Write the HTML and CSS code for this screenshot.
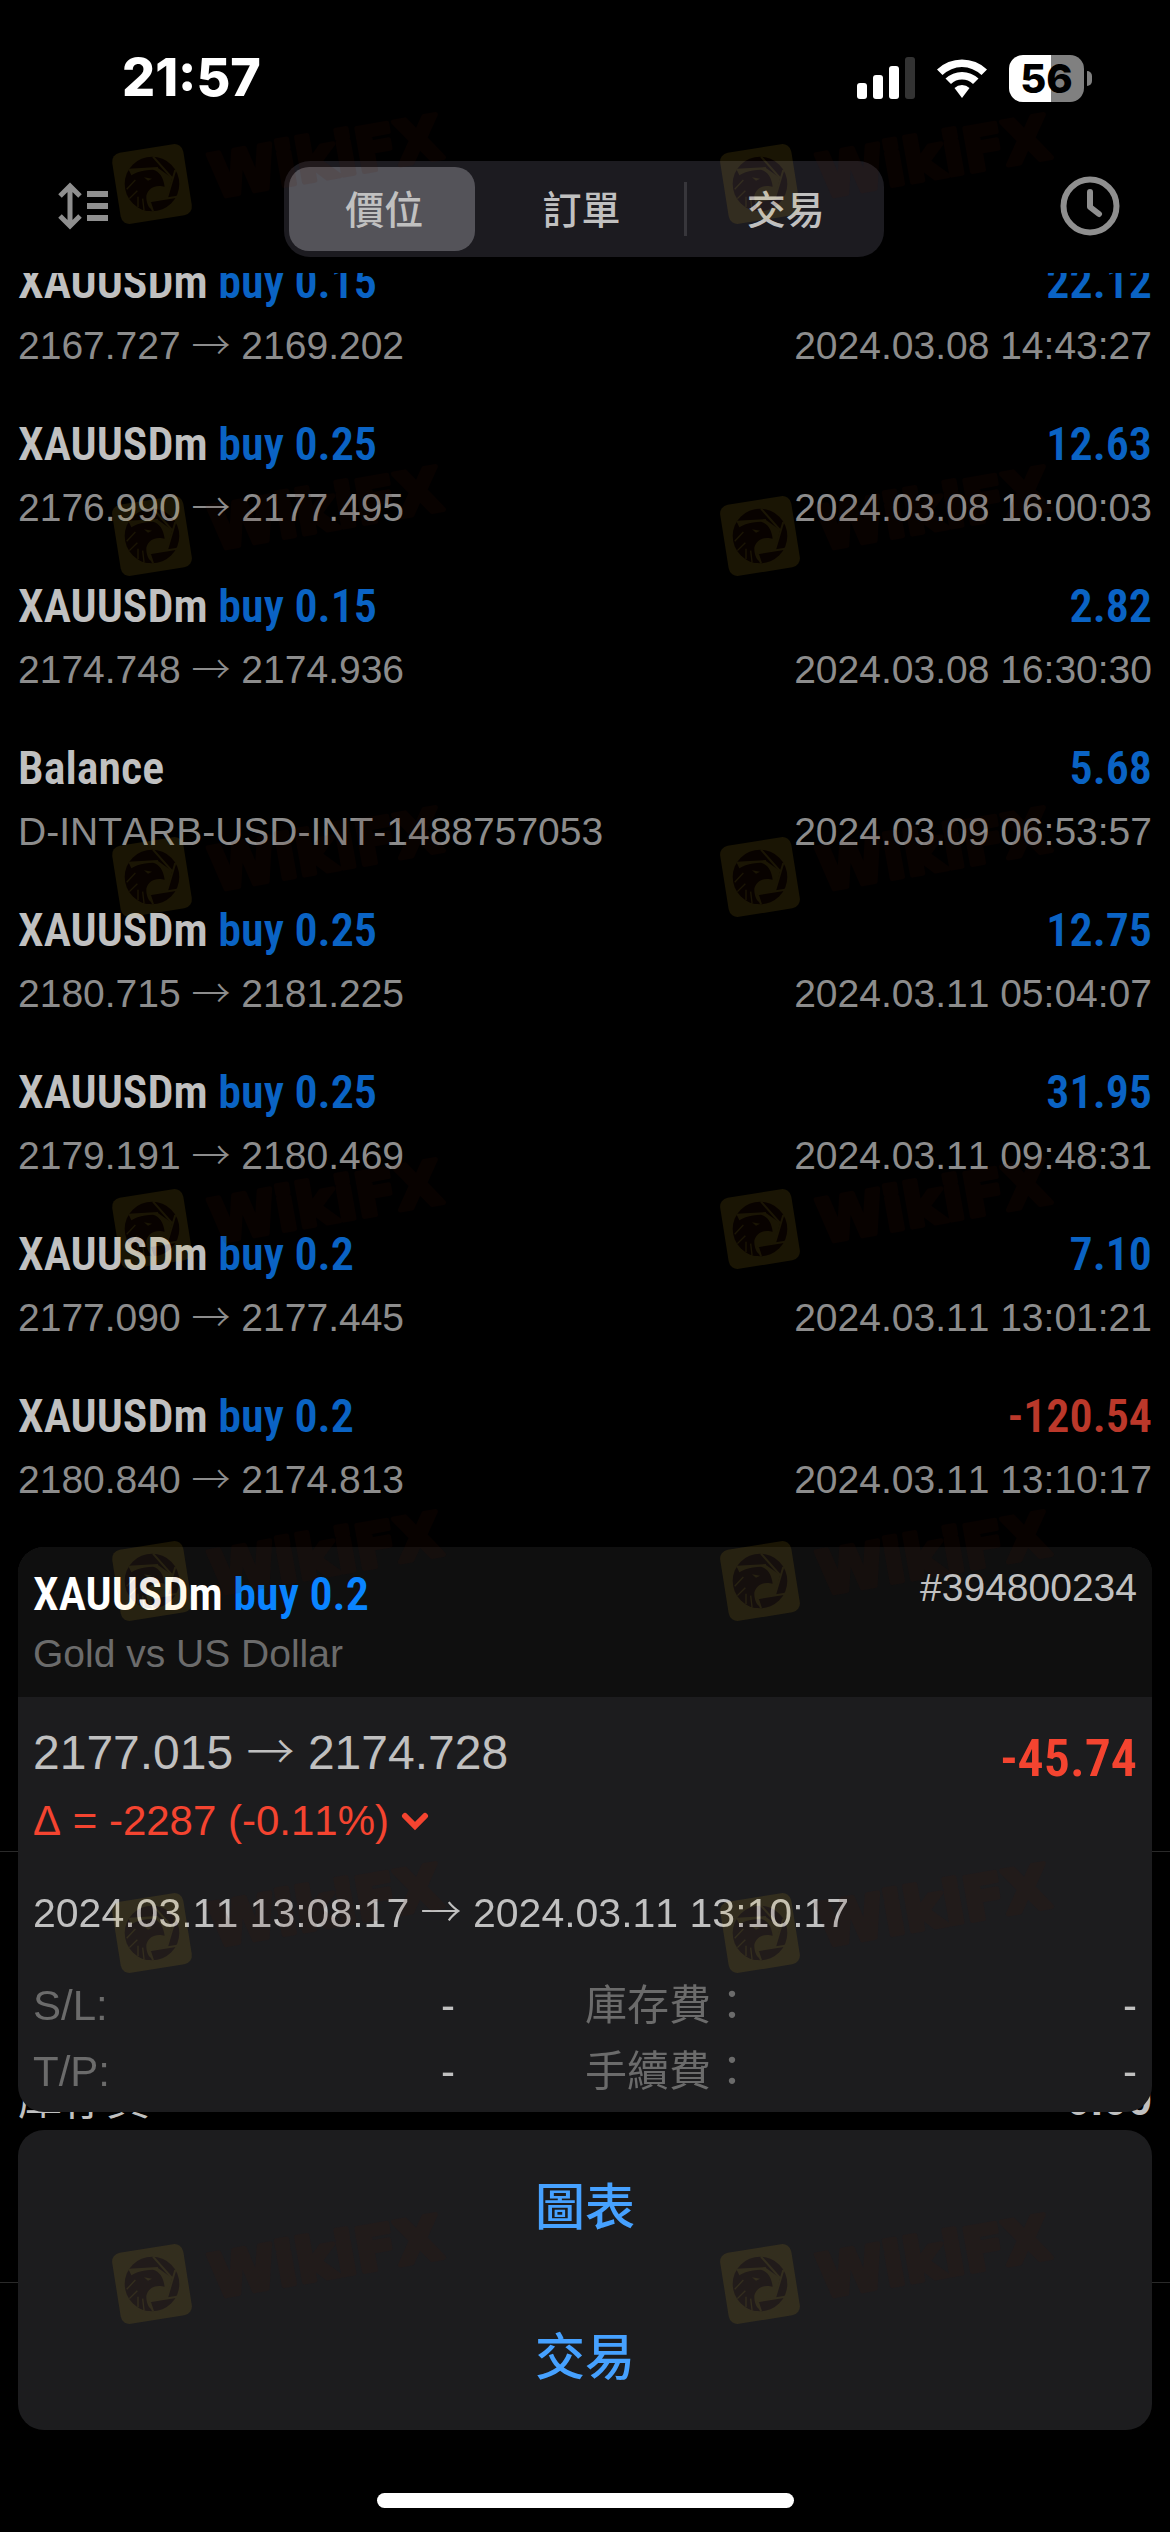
FILE: index.html
```
<!DOCTYPE html>
<html lang="zh-Hant">
    <head>
        <meta charset="UTF-8">
        <meta name="viewport" content="width=device-width, initial-scale=1">
        <title>交易</title>
        <link rel="stylesheet" href="styles.css">
    </head>
    <body>
        <header class="topbar">
            <div class="status">
                <span class="clock">21:57</span>
                <div class="status-icons">
                    <svg width="58" height="43" viewBox="0 0 58 43" aria-hidden="true">
                        <rect x="0" y="26" width="10" height="16" rx="3" fill="#fff"/>
                        <rect x="16" y="18" width="10" height="24" rx="3" fill="#fff"/>
                        <rect x="32" y="9" width="10" height="33" rx="3" fill="#fff"/>
                        <rect x="48" y="0" width="10" height="42" rx="3" fill="#333"/>
                    </svg>
                    <svg width="50" height="42" viewBox="0 0 50 42" aria-hidden="true">
                        <path d="M0 12.500A36 36 0 0 1 50 12.500L44.500 18A28 28 0 0 0 5.500 18Z" fill="#fff"/>
                        <path d="M8.500 21.500A24 24 0 0 1 41.500 21.500L36 27A16 16 0 0 0 14 27Z" fill="#fff"/>
                        <path d="M17.500 31A11 11 0 0 1 32.500 31L25 41Z" fill="#fff"/>
                    </svg>
                    <div class="battery"><span class="battery-level">56</span><span class="battery-tip"></span></div>
                </div>
            </div>
            <nav class="navbar">
                <button class="icon-btn" aria-label="排序">
                    <svg width="50" height="48" viewBox="0 0 50 48" fill="none" stroke="#8f8f8f" aria-hidden="true">
                        <path d="M12 4V44M2 14L12 4L22 14M2 34L12 44L22 34" stroke-width="5"/>
                        <path d="M29 12H50M29 24H50M29 36H50" stroke-width="6"/>
                    </svg>
                </button>
                <div class="segment">
                    <button class="segment-btn active">價位</button>
                    <button class="segment-btn">訂單</button>
                    <button class="segment-btn divided">交易</button>
                </div>
                <button class="icon-btn" aria-label="時間">
                    <svg width="60" height="60" viewBox="0 0 60 60" fill="none" stroke="#8f8f8f" stroke-width="6" stroke-linecap="round" stroke-linejoin="round" aria-hidden="true">
                        <circle cx="30" cy="30" r="26.500"/>
                        <path d="M30 16V31L39 38"/>
                    </svg>
                </button>
            </nav>
        </header>

        <main class="history">
            <div class="deals">
                <div class="deal">
                    <div class="line title"><span>XAUUSDm <b class="buy">buy 0.15</b></span><b class="buy">22.12</b></div>
                    <div class="line info"><span>2167.727 <i class="arrow">→</i> 2169.202</span><span>2024.03.08 14:43:27</span></div>
                </div>
                <div class="deal">
                    <div class="line title"><span>XAUUSDm <b class="buy">buy 0.25</b></span><b class="buy">12.63</b></div>
                    <div class="line info"><span>2176.990 <i class="arrow">→</i> 2177.495</span><span>2024.03.08 16:00:03</span></div>
                </div>
                <div class="deal">
                    <div class="line title"><span>XAUUSDm <b class="buy">buy 0.15</b></span><b class="buy">2.82</b></div>
                    <div class="line info"><span>2174.748 <i class="arrow">→</i> 2174.936</span><span>2024.03.08 16:30:30</span></div>
                </div>
                <div class="deal">
                    <div class="line title"><span>Balance</span><b class="buy">5.68</b></div>
                    <div class="line info"><span>D-INTARB-USD-INT-1488757053</span><span>2024.03.09 06:53:57</span></div>
                </div>
                <div class="deal">
                    <div class="line title"><span>XAUUSDm <b class="buy">buy 0.25</b></span><b class="buy">12.75</b></div>
                    <div class="line info"><span>2180.715 <i class="arrow">→</i> 2181.225</span><span>2024.03.11 05:04:07</span></div>
                </div>
                <div class="deal">
                    <div class="line title"><span>XAUUSDm <b class="buy">buy 0.25</b></span><b class="buy">31.95</b></div>
                    <div class="line info"><span>2179.191 <i class="arrow">→</i> 2180.469</span><span>2024.03.11 09:48:31</span></div>
                </div>
                <div class="deal">
                    <div class="line title"><span>XAUUSDm <b class="buy">buy 0.2</b></span><b class="buy">7.10</b></div>
                    <div class="line info"><span>2177.090 <i class="arrow">→</i> 2177.445</span><span>2024.03.11 13:01:21</span></div>
                </div>
                <div class="deal">
                    <div class="line title"><span>XAUUSDm <b class="buy">buy 0.2</b></span><b class="loss">-120.54</b></div>
                    <div class="line info"><span>2180.840 <i class="arrow">→</i> 2174.813</span><span>2024.03.11 13:10:17</span></div>
                </div>
            </div>
            <div class="summary">
                <div class="line"><span>庫存費</span><b>0.00</b></div>
            </div>
        </main>

        <section class="sheet">
            <div class="card">
                <div class="card-head">
                    <div>
                        <div class="card-title">XAUUSDm <b>buy 0.2</b></div>
                        <div class="card-name">Gold vs US Dollar</div>
                    </div>
                    <span class="ticket">#394800234</span>
                </div>
                <div class="card-body">
                    <div class="line price"><span>2177.015 <i class="arrow">→</i> 2174.728</span><b>-45.74</b></div>
                    <div class="delta">
                        <span>Δ = -2287 (-0.11%)</span>
                        <svg width="28" height="20" viewBox="0 0 28 20" fill="none" stroke="#f44430" stroke-width="6" stroke-linecap="round" aria-hidden="true"><path d="M4 5L14 15L24 5"/></svg>
                    </div>
                    <div class="period">2024.03.11 13:08:17 <i class="arrow">→</i> 2024.03.11 13:10:17</div>
                    <dl class="fees">
                        <div class="line"><dt>S/L:</dt><dd>-</dd></div>
                        <div class="line"><dt>庫存費：</dt><dd>-</dd></div>
                        <div class="line"><dt>T/P:</dt><dd>-</dd></div>
                        <div class="line"><dt>手續費：</dt><dd>-</dd></div>
                    </dl>
                </div>
            </div>
            <div class="actions">
                <button class="action-btn">圖表</button>
                <button class="action-btn">交易</button>
            </div>
            <div class="home-bar"></div>
        </section>

        <!-- watermark over everything -->
        <svg class="watermark" viewBox="0 0 1170 2532" aria-hidden="true">
            <defs>
                <g id="mark">
                    <rect x="-36" y="-36" width="72" height="72" rx="9" fill="#fac828" transform="rotate(-9)"/>
                    <g transform="scale(0.333)">
                        <circle r="82" fill="#501400"/>
                        <path d="M-70 -43L18 -48L60 -18L45 42L-7 52L3 80L-20 60Z" fill="#fac828"/>
                        <path d="M3 -82L60 -18M70 -42L45 42M76 38L-7 52M-7 52L3 82M-70 -43L18 -48" stroke="#fac828" stroke-width="6"/>
                        <path d="M-79 -10C-60 -35 -30 -42 3 -43C22 -38 35 -20 38 8L26 6C5 4 -12 15 -17 35C-18 55 -10 70 -2 80C-40 85 -75 50 -79 -10Z" fill="#501400"/>
                        <path d="M-76 16L-50 -12M-68 44L-44 20M-42 70L-42 38M-24 78L-28 44" stroke="#fac828" stroke-width="4"/>
                        <path d="M-24 -20L0 -16L-12 -10Z" fill="#fac828"/>
                    </g>
                    <text class="mark-text" transform="translate(62 14) rotate(-10)">WikiFX</text>
                </g>
                <g id="mark-row">
                    <use href="#mark" x="152" y="184"/>
                    <use href="#mark" x="760" y="184"/>
                </g>
            </defs>
            <use href="#mark-row"/>
            <use href="#mark-row" y="352"/>
            <use href="#mark-row" y="693"/>
            <use href="#mark-row" y="1045"/>
            <use href="#mark-row" y="1397"/>
            <use href="#mark-row" y="1749"/>
            <use href="#mark-row" y="2100"/>
        </svg>
    </body>
</html>
```
FILE: styles.css
```
* {
    box-sizing: border-box;
}
body {
    margin: 0;
    height: 100vh;
    display: flex;
    flex-direction: column;
    overflow: hidden;
    background-color: #000;
    color: #c0c0c0;
    font-family: "Liberation Sans", "Noto Sans CJK TC", sans-serif;
    font-kerning: none;
}
button {
    border: none;
    padding: 0;
    background: none;
    color: inherit;
    font-family: inherit;
    cursor: pointer;
}
svg {
    display: block;
}
.line {
    display: flex;
    justify-content: space-between;
}
.arrow {
    font-family: "Noto Sans CJK TC", sans-serif;
    font-style: normal;
    font-weight: 300;
    line-height: 1;
}

/* status bar and navigation */
.status {
    display: flex;
    justify-content: space-between;
    align-items: center;
    padding: 48px 78px 0 122px;
}
.clock {
    color: #fff;
    font: 800 52px/60px Inter, sans-serif;
}
.status-icons {
    display: flex;
    align-items: center;
    gap: 22px;
}
.battery {
    display: flex;
    align-items: center;
    gap: 3px;
}
.battery-level {
    width: 75px;
    border-radius: 14px;
    background: linear-gradient(90deg, #fff 56%, #808080 56%);
    color: #000;
    font: 800 40px/47px Inter, sans-serif;
    text-align: center;
}
.battery-tip {
    width: 5px;
    height: 15px;
    border-radius: 0 8px 8px 0;
    background-color: #808080;
}
.navbar {
    display: flex;
    justify-content: space-between;
    align-items: center;
    padding: 53px 50px 16px 58px;
}
.icon-btn {
    margin-bottom: 6px;
}
.segment {
    display: grid;
    grid-template-columns: 186fr 188fr 200fr;
    gap: 10px;
    width: 600px;
    height: 96px;
    padding: 6px 0 6px 5px;
    border-radius: 26px;
    background-color: #1c1b20;
}
.segment-btn {
    position: relative;
    padding: 0 0 4px 4px;
    border-radius: 20px;
    font-size: 39px;
    font-weight: 500;
}
.segment-btn.active {
    background-color: #545359;
}
.segment-btn.divided::before {
    content: "";
    position: absolute;
    left: 0;
    top: 15px;
    bottom: 15px;
    width: 3px;
    background-color: #37363b;
}

/* deal list */
.history {
    flex: 1;
    overflow: hidden;
    padding-bottom: 250px;
}
.deals {
    margin-top: -21px;
    padding: 0 18px;
}
.deal {
    padding-bottom: 44px;
}
.title {
    margin-bottom: 10px;
}
.title,
.card-title {
    font: 600 46px/60px "Roboto Condensed", "Liberation Sans Narrow", sans-serif;
}
.title b,
.card-title b {
    font-weight: 600;
}
.info {
    color: #8c8c8c;
    font-size: 39px;
    line-height: 48px;
}
.buy {
    color: #0a63c4;
}
.loss {
    color: #bb382a;
}
.summary {
    height: 432px;
    margin-top: 303px;
    padding: 218px 18px 0;
    border-top: 1px solid #2a2a2a;
    border-bottom: 1px solid #2a2a2a;
    font-size: 44px;
    line-height: 60px;
}

/* bottom sheet */
.sheet {
    position: fixed;
    left: 0;
    right: 0;
    bottom: 0;
    padding: 0 18px 24px;
}
.card,
.actions {
    overflow: hidden;
    border-radius: 26px;
    background-color: #1c1c1e;
}
.card {
    margin-bottom: 18px;
}
.card-head {
    display: flex;
    justify-content: space-between;
    padding: 17px 15px 16px;
    background-color: #0f0f0f;
    font-size: 39px;
}
.card-title {
    margin-bottom: 3px;
    color: #fff;
}
.card-title b {
    color: #0a84ff;
}
.card-name {
    color: #6b6b6b;
    line-height: 54px;
}
.ticket {
    line-height: 48px;
}
.card-body {
    padding: 24px 15px 7px;
}
.price {
    font-size: 48px;
    line-height: 64px;
}
.price b {
    color: #f44430;
    font: 600 52px/76px "Roboto Condensed", "Liberation Sans Narrow", sans-serif;
}
.delta {
    display: flex;
    align-items: center;
    gap: 12px;
    color: #f44430;
    font-size: 42px;
    line-height: 48px;
}
.period {
    margin: 44px 0 36px;
    font-size: 41px;
    line-height: 48px;
}
.fees {
    display: grid;
    grid-template-columns: 1fr 1fr;
    margin: 0;
    font-size: 42px;
    line-height: 66px;
}
.fees .line:nth-child(odd) {
    padding-right: 130px;
}
.fees dt {
    color: #6b6b6b;
}
.fees dd {
    margin: 0;
}
.actions {
    display: flex;
    flex-direction: column;
}
.action-btn {
    height: 150px;
    padding-bottom: 4px;
    color: #46a1ff;
    font-size: 50px;
    font-weight: 500;
}
.home-bar {
    width: 417px;
    height: 15px;
    margin: 63px auto 0;
    border-radius: 8px;
    background-color: #fff;
}

.watermark {
    position: absolute;
    left: 0;
    top: 0;
    width: 100%;
    opacity: 0.1;
    pointer-events: none;
}
.mark-text {
    fill: #501400;
    stroke: #501400;
    stroke-width: 5;
    stroke-linejoin: round;
    font: 700 60px "DejaVu Sans", sans-serif;
}
```
